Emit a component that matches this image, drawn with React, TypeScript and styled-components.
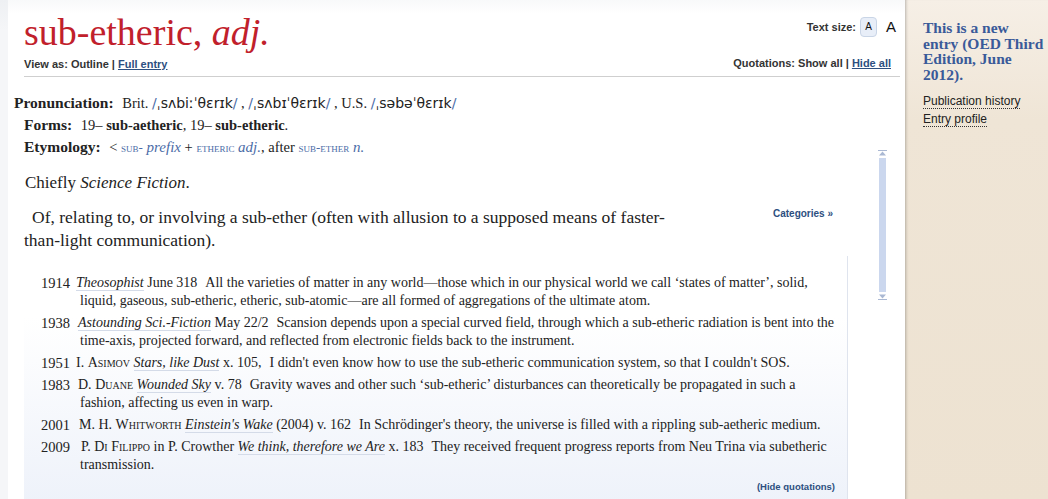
import React from "react";
import styled, { createGlobalStyle } from "styled-components";

const GlobalStyle = createGlobalStyle`
  html, body {
    margin: 0;
    padding: 0;
    background: #f3f4f6;
  }
  #root {
    min-height: 499px;
  }
`;

const serif = `"Liberation Serif", "Times New Roman", serif`;
const sans = `"Liberation Sans", Arial, sans-serif`;
const ipa = `"DejaVu Sans", "Liberation Sans", sans-serif`;

const Page = styled.div`
  display: grid;
  grid-template-columns: 897px 143px;
  padding-left: 8px;
  min-height: 499px;
  background: linear-gradient(#eef0f3, #f5f6f8 30px);
`;

const Main = styled.main`
  background: linear-gradient(#f8f9fa, #ffffff 14px);
  color: #222;
  font-family: ${serif};
  overflow: hidden;
`;

const Header = styled.header`
  display: flex;
  justify-content: space-between;
  margin: 0 5px 0 16px;
  padding-top: 10px;
  height: 66px;
  border-bottom: 1px solid #cfcfcf;
`;

const Title = styled.h1`
  margin: 0;
  font-family: ${serif};
  font-weight: normal;
  font-size: 38px;
  line-height: 44px;
  color: #c1202b;
  em {
    font-style: italic;
  }
`;

const Small = styled.div`
  font-family: ${sans};
  font-size: 11px;
  font-weight: bold;
  color: #333;
  line-height: 14px;
  a {
    color: #2d4f80;
    text-decoration: underline;
  }
`;

const ViewAs = styled(Small)`
  margin-top: 3px;
`;

const HeadRight = styled.div`
  display: flex;
  flex-direction: column;
  align-items: flex-end;
  padding-right: 9px;
`;

const SizeRow = styled(Small)`
  display: flex;
  align-items: center;
  gap: 4px;
  margin: 7px -6px 0 0;
`;

const SizeBtn = styled.span<{ $big?: boolean }>`
  display: inline-flex;
  align-items: center;
  justify-content: center;
  font-family: ${sans};
  font-weight: normal;
  color: #111;
  ${(p) =>
    p.$big
      ? `font-size: 15px; width: 12px; margin-left: 4px;`
      : `font-size: 10px; width: 15px; height: 18px; border: 1px solid #c9d5e6; border-radius: 4px; background: #e8eef8;`}
`;

const QuotRow = styled(Small)`
  margin-top: 19px;
`;

const Content = styled.section`
  display: flex;
`;

const LeftCol = styled.div`
  width: 840px;
  padding-top: 15px;
`;

const Label = styled.span`
  font-weight: bold;
  font-size: 15.5px;
  margin-right: 5px;
`;

const Pron = styled.div<{ $indent?: number }>`
  font-size: 14.5px;
  line-height: 22px;
  padding-left: ${(p) => p.$indent ?? 16}px;
  white-space: nowrap;
`;

const Ipa = styled.span`
  font-family: ${ipa};
  font-size: 14px;
  &::before,
  &::after {
    content: "/";
    color: #4b6ca7;
  }
`;

const SmallCap = styled.span<{ $link?: boolean }>`
  font-variant: small-caps;
  color: ${(p) => (p.$link ? "#4b6ca7" : "inherit")};
  ${(p) => (p.$link ? "font-size: 13px;" : "")}
`;

const LinkItalic = styled.em`
  color: #4b6ca7;
  font-size: 15px;
`;

const Chiefly = styled.p`
  margin: 0;
  padding: 13px 0 0 17px;
  font-size: 17px;
  line-height: 22px;
`;

const DefRow = styled.div`
  display: flex;
  justify-content: space-between;
  padding: 12px 15px 0 16px;
`;

const DefText = styled.p`
  margin: 0;
  width: 652px;
  text-indent: 8px;
  font-size: 17.5px;
  line-height: 23px;
`;

const Categories = styled.a`
  font-family: ${sans};
  font-size: 10px;
  font-weight: bold;
  color: #2d4f80;
  margin-top: 2px;
`;

const QuoteBox = styled.div`
  margin: 4px 0 0 16px;
  padding: 18px 12px 8px 17px;
  border-right: 1px solid #dfe4ee;
  background: linear-gradient(#ffffff 25%, #eef2fa);
  min-height: 220px;
`;

const Quote = styled.div`
  display: grid;
  grid-template-columns: 35px 1fr;
  font-size: 14px;
  line-height: 18px;
  margin-bottom: 4px;
`;

const Year = styled.span`
  font-size: 14.5px;
`;

const QText = styled.div<{ $lead?: number }>`
  padding-left: 4px;
  text-indent: ${(p) => (p.$lead ?? 0) - 4}px;
`;

const Work = styled.em`
  border-bottom: 1px solid #d4dbe8;
`;

const Gap = styled.span`
  margin-left: 8px;
`;

const HideQ = styled.div`
  text-align: right;
  font-family: ${sans};
  font-size: 9.5px;
  font-weight: bold;
  color: #2d4f80;
  margin-top: 7px;
`;

const ScrollCol = styled.div`
  padding: 73px 0 0 30px;
`;

const ScrollBar = styled.div`
  display: flex;
  flex-direction: column;
  align-items: center;
  width: 9px;
`;

const Track = styled.div`
  width: 7px;
  height: 134px;
  background: #cbd7ee;
  margin: 2px 0;
`;

const Side = styled.aside`
  background: linear-gradient(#f6efe6, #efe5d6 120px, #ede2d1);
  box-shadow: inset 3px 0 3px -2px rgba(0, 0, 0, 0.25);
  padding: 20px 0 0 18px;
`;

const SideTitle = styled.p`
  margin: 0;
  font-family: ${serif};
  font-weight: bold;
  font-size: 15.5px;
  line-height: 15.6px;
  color: #3a5a99;
  white-space: nowrap;
`;

const SideLinks = styled.div`
  margin-top: 12px;
  display: flex;
  flex-direction: column;
  align-items: flex-start;
  gap: 3px;
`;

const SideLink = styled.a`
  font-family: ${sans};
  font-size: 12px;
  line-height: 14px;
  color: #222;
  border-bottom: 1px dotted #333;
`;

const Arrow = ({ up }: { up?: boolean }) => (
  <svg width="9" height="6" viewBox="0 0 9 6">
    {up ? (
      <>
        <rect x="0" y="0" width="9" height="1" fill="#aab8d3" />
        <path d="M4.5 1.5 L8 5.5 L1 5.5 Z" fill="#aab8d3" />
      </>
    ) : (
      <>
        <path d="M1 0.5 L8 0.5 L4.5 4.5 Z" fill="#aab8d3" />
        <rect x="0" y="5" width="9" height="1" fill="#aab8d3" />
      </>
    )}
  </svg>
);

const quotes = [
  {
    year: "1914",
    lead: 0,
    body: (
      <>
        <Work>Theosophist</Work> June 318<Gap />All the varieties of matter in any
        world—those which in our physical world we call ‘states of matter’, solid,
        liquid, gaseous, sub-etheric, etheric, sub-atomic—are all formed of
        aggregations of the ultimate atom.
      </>
    ),
  },
  {
    year: "1938",
    lead: 2,
    body: (
      <>
        <Work>Astounding Sci.-Fiction</Work> May 22/2<Gap />Scansion depends upon a
        special curved field, through which a sub-etheric radiation is bent into the
        time-axis, projected forward, and reflected from electronic fields back to the
        instrument.
      </>
    ),
  },
  {
    year: "1951",
    lead: 0,
    body: (
      <>
        I. <SmallCap>Asimov</SmallCap> <Work>Stars, like Dust</Work> x. 105,<Gap />I
        didn't even know how to use the sub-etheric communication system, so that I
        couldn't SOS.
      </>
    ),
  },
  {
    year: "1983",
    lead: 2,
    body: (
      <>
        D. <SmallCap>Duane</SmallCap> <Work>Wounded Sky</Work> v. 78<Gap />Gravity
        waves and other such ‘sub-etheric’ disturbances can theoretically be
        propagated in such a fashion, affecting us even in warp.
      </>
    ),
  },
  {
    year: "2001",
    lead: 3,
    body: (
      <>
        M. H. <SmallCap>Whitworth</SmallCap> <Work>Einstein's Wake</Work> (2004) v.
        162<Gap />In Schrödinger's theory, the universe is filled with a rippling
        sub-aetheric medium.
      </>
    ),
  },
  {
    year: "2009",
    lead: 5,
    body: (
      <>
        P. <SmallCap>Di Filippo</SmallCap> in P. Crowther{" "}
        <Work>We think, therefore we Are</Work> x. 183<Gap />They received frequent
        progress reports from Neu Trina via subetheric transmission.
      </>
    ),
  },
];

const App = () => {
  return (
    <>
      <GlobalStyle />
      <Page>
        <Main>
          <Header>
            <div>
              <Title>
                sub-etheric, <em>adj.</em>
              </Title>
              <ViewAs>
                View as: Outline | <a>Full entry</a>
              </ViewAs>
            </div>
            <HeadRight>
              <SizeRow>
                Text size: <SizeBtn>A</SizeBtn>
                <SizeBtn $big>A</SizeBtn>
              </SizeRow>
              <QuotRow>
                Quotations: Show all | <a>Hide all</a>
              </QuotRow>
            </HeadRight>
          </Header>
          <Content>
            <LeftCol>
              <Pron $indent={6}>
                <Label>Pronunciation:</Label> Brit. <Ipa>ˌsʌbiːˈθɛrɪk</Ipa> ,{" "}
                <Ipa>ˌsʌbɪˈθɛrɪk</Ipa> , U.S. <Ipa>ˌsəbəˈθɛrɪk</Ipa>
              </Pron>
              <Pron>
                <Label>Forms:</Label> 19– <b>sub-aetheric</b>, 19–{" "}
                <b>sub-etheric</b>.
              </Pron>
              <Pron>
                <Label>Etymology:</Label> &lt; <SmallCap $link>sub-</SmallCap>{" "}
                <LinkItalic>prefix</LinkItalic> + <SmallCap $link>etheric</SmallCap>{" "}
                <LinkItalic>adj.</LinkItalic>, after{" "}
                <SmallCap $link>sub-ether</SmallCap> <LinkItalic>n.</LinkItalic>
              </Pron>
              <Chiefly>
                Chiefly <em>Science Fiction</em>.
              </Chiefly>
              <DefRow>
                <DefText>
                  Of, relating to, or involving a sub-ether (often with allusion to a
                  supposed means of faster-than-light communication).
                </DefText>
                <Categories>Categories »</Categories>
              </DefRow>
              <QuoteBox>
                {quotes.map((q) => (
                  <Quote key={q.year}>
                    <Year>{q.year}</Year>
                    <QText $lead={q.lead}>{q.body}</QText>
                  </Quote>
                ))}
                <HideQ>(Hide quotations)</HideQ>
              </QuoteBox>
            </LeftCol>
            <ScrollCol>
              <ScrollBar>
                <Arrow up />
                <Track />
                <Arrow />
              </ScrollBar>
            </ScrollCol>
          </Content>
        </Main>
        <Side>
          <SideTitle>
            This is a new
            <br />
            entry (OED Third
            <br />
            Edition, June
            <br />
            2012).
          </SideTitle>
          <SideLinks>
            <SideLink>Publication history</SideLink>
            <SideLink>Entry profile</SideLink>
          </SideLinks>
        </Side>
      </Page>
    </>
  );
};

export default App;
